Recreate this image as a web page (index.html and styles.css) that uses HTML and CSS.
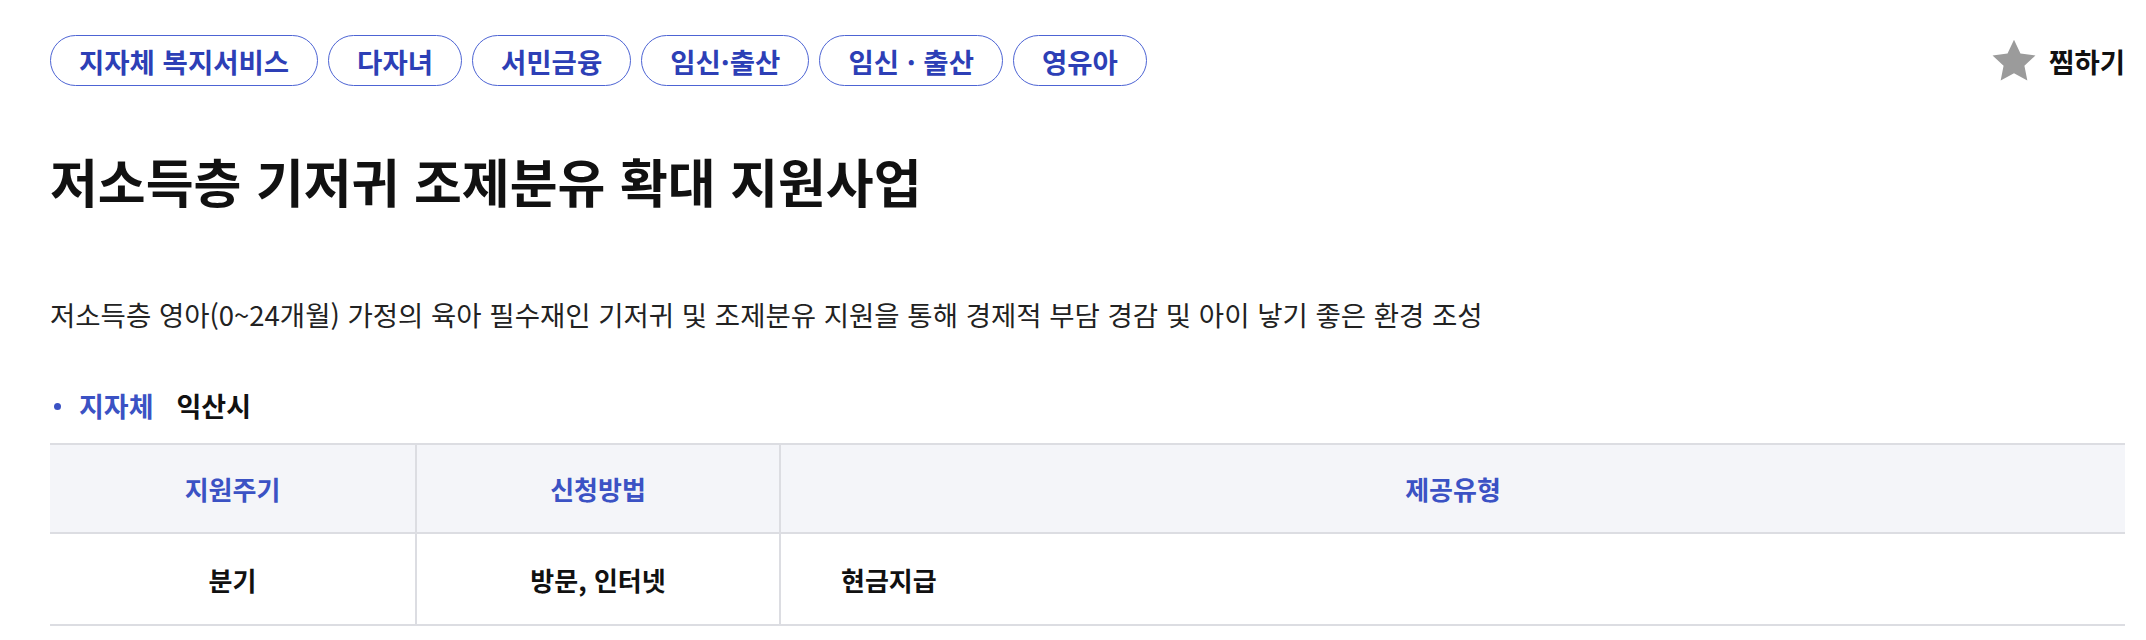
FILE: index.html
```html
<!DOCTYPE html>
<html lang="ko">
<head>
    <meta charset="utf-8">
    <title>저소득층 기저귀 조제분유 확대 지원사업</title>
    <meta name="viewport" content="width=device-width, initial-scale=1">
    <link rel="stylesheet" href="styles.css">
</head>
<body>
    <div class="page">
        <div class="top">
            <ul class="tags">
                <li class="tag">지자체 복지서비스</li>
                <li class="tag">다자녀</li>
                <li class="tag">서민금융</li>
                <li class="tag">임신·출산</li>
                <li class="tag">임신 · 출산</li>
                <li class="tag">영유아</li>
            </ul>
            <button class="fav" type="button">
                <svg class="fav-icon" viewBox="0 0 24 24" width="50" height="50" aria-hidden="true">
                    <path d="M12 1.8l3.1 6.6 7.2.9-5.3 5 1.4 7.1L12 17.9l-6.4 3.5 1.4-7.1-5.3-5 7.2-.9z"/>
                </svg>
                <span>찜하기</span>
            </button>
        </div>

        <h1 class="title">저소득층 기저귀 조제분유 확대 지원사업</h1>

        <p class="desc">저소득층 영아(0~24개월) 가정의 육아 필수재인 기저귀 및 조제분유 지원을 통해 경제적 부담 경감 및 아이 낳기 좋은 환경 조성</p>

        <div class="meta">
            <span class="meta-dot"></span>
            <span class="meta-label">지자체</span>
            <span class="meta-value">익산시</span>
        </div>

        <table class="info">
            <colgroup>
                <col class="col-cycle">
                <col class="col-method">
                <col>
            </colgroup>
            <thead>
                <tr>
                    <th>지원주기</th>
                    <th>신청방법</th>
                    <th>제공유형</th>
                </tr>
            </thead>
            <tbody>
                <tr>
                    <td>분기</td>
                    <td>방문, 인터넷</td>
                    <td class="left">현금지급</td>
                </tr>
            </tbody>
        </table>
    </div>
</body>
</html>
```

FILE: styles.css
```css
body {
    margin: 0;
    background: #fff;
    color: #111;
    font-family: "Noto Sans CJK KR", "Noto Sans", sans-serif;
}
.page {
    padding: 35px 21px 0 50px;
}
.top {
    display: flex;
    align-items: center;
    justify-content: space-between;
}
.tags {
    display: flex;
    gap: 10px;
    margin: 0;
    padding: 0;
    list-style: none;
}
.tag {
    height: 49px;
    display: flex;
    align-items: center;
    padding: 0 28px;
    border: 1.5px solid #4d64d4;
    border-radius: 26px;
    color: #2d3fb6;
    font-size: 27.5px;
    font-weight: 700;
    white-space: nowrap;
}
.fav {
    display: flex;
    align-items: center;
    gap: 10px;
    background: none;
    border: none;
    padding: 0;
    font-family: inherit;
    font-size: 27.5px;
    font-weight: 700;
    color: #111;
    cursor: pointer;
}
.fav-icon {
    fill: #9b9b9b;
}
.title {
    margin: 62px 0 0;
    font-size: 52px;
    font-weight: 700;
    line-height: 66px;
}
.desc {
    margin: 82px 0 0;
    font-size: 27.5px;
    line-height: 36px;
    color: #222;
}
.meta {
    display: flex;
    align-items: center;
    margin-top: 56px;
    font-size: 27px;
    font-weight: 700;
    line-height: 36px;
}
.meta-dot {
    width: 7px;
    height: 7px;
    border-radius: 50%;
    background: #3b52c4;
    margin: 0 18px 0 4px;
}
.meta-label {
    color: #3b52c4;
    margin-right: 23px;
}
.info {
    width: 100%;
    margin-top: 19px;
    border-collapse: collapse;
    table-layout: fixed;
    font-size: 26px;
}
.col-cycle {
    width: 366px;
}
.col-method {
    width: 364px;
}
.info th {
    height: 87px;
    background: #f4f5f9;
    color: #3b52c4;
    font-weight: 700;
    border-top: 2px solid #dcdde2;
    border-bottom: 2px solid #dcdde2;
    padding: 0;
}
.info td {
    height: 90px;
    text-align: center;
    font-weight: 700;
    border-bottom: 2px solid #dcdde2;
    padding: 0;
}
.info th + th,
.info td + td {
    border-left: 2px solid #dcdde2;
}
.info td.left {
    text-align: left;
    padding-left: 60px;
}
```
